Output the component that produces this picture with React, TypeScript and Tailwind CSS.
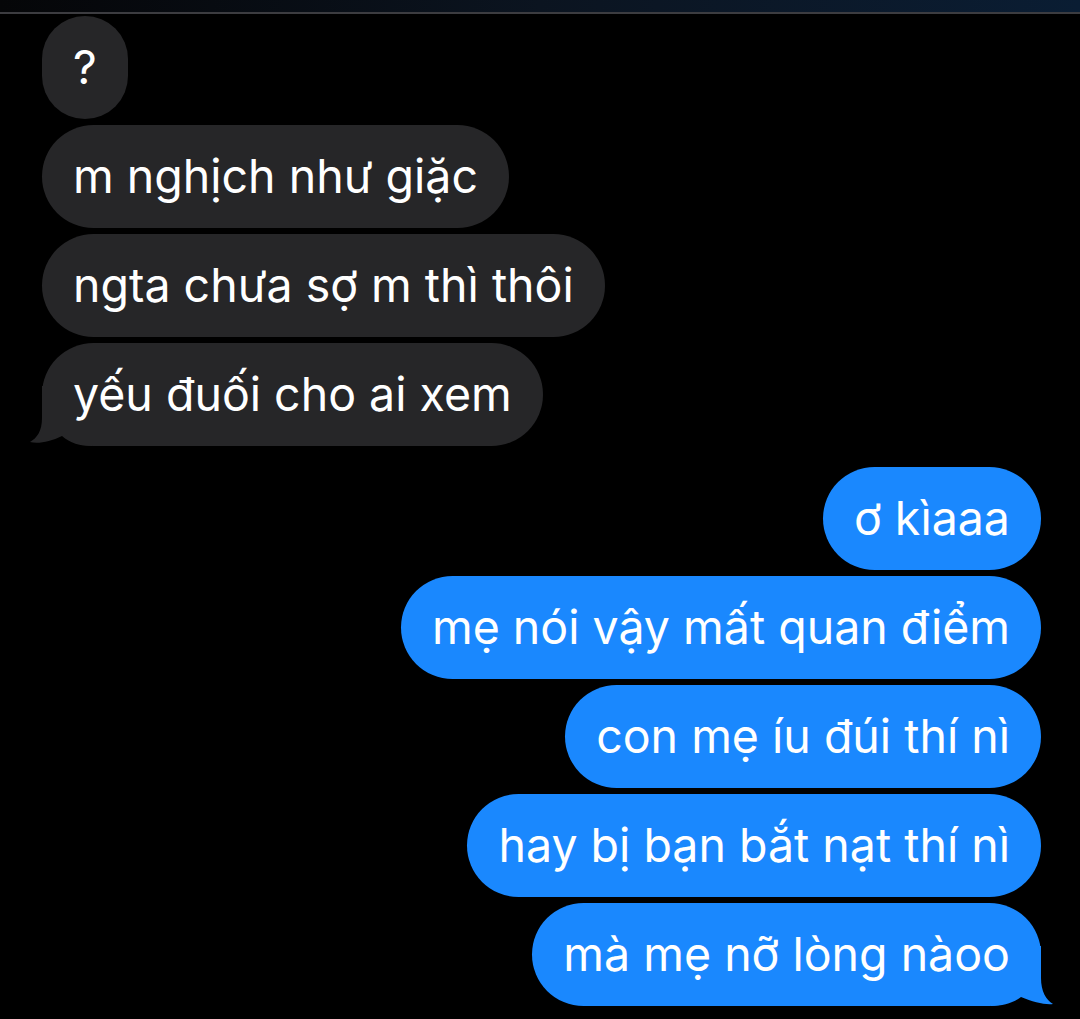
import React from "react";

const grey = "#262628";
const blue = "#1a88fe";

function Bubble({ text, side, tail }: { text: string; side: "l" | "r"; tail?: boolean }) {
  const isL = side === "l";
  return (
    <div className={`relative h-[103px] rounded-full flex items-center px-[31px] text-white text-[46.5px] whitespace-nowrap ${isL ? "self-start bg-[#262628]" : "self-end bg-[#1a88fe]"}`}>
      <span className="relative z-10">{text}</span>
      {tail && isL && (
        <svg className="absolute left-[-12px] bottom-0" width="62" height="60" viewBox="-12 -60 62 60">
          <path d="M 0,-60 L 0,-28 C 0,-15 -5,-8 -12,-4 C -4,-2 8,-4 20,-10 C 28,-3 38,0 50,0 L 50,-60 Z" fill={grey} />
        </svg>
      )}
      {tail && !isL && (
        <svg className="absolute right-[-12px] bottom-0" width="62" height="60" viewBox="-50 -60 62 60">
          <path d="M 0,-60 L 0,-28 C 0,-15 5,-6 12,-2 C 4,-1 -8,-4 -20,-9 C -28,-3 -38,0 -50,0 L -50,-60 Z" fill={blue} />
        </svg>
      )}
    </div>
  );
}

export default function App() {
  return (
    <div className="w-[1080px] h-[1019px] bg-black overflow-hidden" style={{ fontFamily: "Inter, 'Noto Sans', sans-serif" }}>
      <div className="h-[12px] bg-gradient-to-r from-[#050608] via-[#0b1420] to-[#0a1d33]" />
      <div className="h-[2px] bg-[#3c3c40]" />
      <div className="flex flex-col gap-[6px] pl-[42px] pr-[39px] pt-[2px]">
        <Bubble side="l" text="?" />
        <Bubble side="l" text="m nghịch như giặc" />
        <Bubble side="l" text="ngta chưa sợ m thì thôi" />
        <Bubble side="l" text="yếu đuối cho ai xem" tail />
        <div className="h-[9px]" />
        <Bubble side="r" text="ơ kìaaa" />
        <Bubble side="r" text="mẹ nói vậy mất quan điểm" />
        <Bubble side="r" text="con mẹ íu đúi thí nì" />
        <Bubble side="r" text="hay bị bạn bắt nạt thí nì" />
        <Bubble side="r" text="mà mẹ nỡ lòng nàoo" tail />
      </div>
    </div>
  );
}
